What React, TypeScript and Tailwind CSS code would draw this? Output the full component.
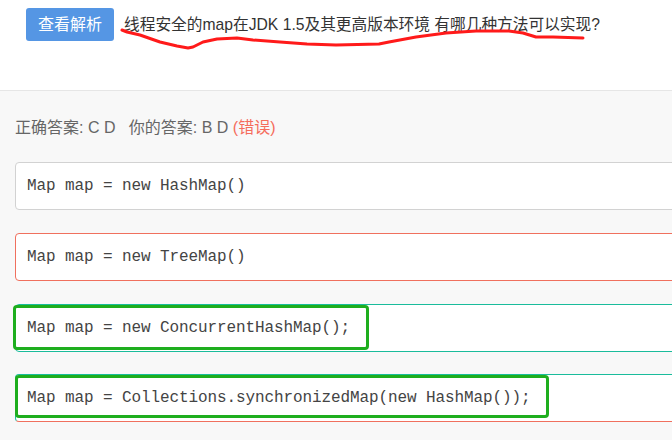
import React from "react";

const cjk = { fontFamily: '"Liberation Sans", "Noto Sans CJK SC", sans-serif' };
const mono = { fontFamily: '"Liberation Mono", "Courier New", monospace' };

function Option({ text, border, green, mt }: { text: string; border: string; green?: { l: number; w: number; h: number }; mt: string }) {
  return (
    <div className={`relative ml-[15px] w-[700px] h-[48px] bg-white rounded-[4px] border flex items-center pl-[11px] ${border} ${mt}`}>
      <span className="text-[16px] text-[#444] whitespace-pre tracking-[-0.1px]" style={mono}>{text}</span>
      {green && (
        <div
          className="absolute top-[0px] border-[3px] border-[#1eae1e] rounded-[4px]"
          style={{ left: green.l, width: green.w, height: green.h }}
        />
      )}
    </div>
  );
}

export default function App() {
  const pts = "122,30 127,32 140,35 160,42 177,46 188,48 193,47 203,42 217,39 237,38 253,40 280,42 307,44 336,45 379,44 389,42 416,37 446,33 476,31 509,31 523,33 536,37 553,37 583,38";
  return (
    <div className="w-[672px] h-[440px] overflow-hidden bg-[#f8f8f8] relative" style={cjk}>
      <div className="h-[91px] bg-white border-b border-[#e6e6e6] flex items-start pl-[26px] pt-[8px] gap-[10px]">
        <div className="h-[33px] px-[12px] bg-[#5596e4] rounded-[3px] text-white text-[16px] flex items-center">查看解析</div>
        <div className="h-[33px] flex items-center text-[15.7px] text-[#333] pt-[1px]">线程安全的map在JDK 1.5及其更高版本环境 有哪几种方法可以实现?</div>
      </div>
      <svg className="absolute left-0 top-0" width="672" height="60">
        <polyline points={pts} fill="none" stroke="#ff1a1a" strokeWidth="3" strokeLinejoin="round" strokeLinecap="round" />
      </svg>
      <div className="pt-[25px] pl-[15px] text-[16px] leading-[24px] text-[#666] whitespace-pre">
        正确答案: C D   你的答案: B D <span className="text-[#f56c5c]">(错误)</span>
      </div>
      <div className="mt-[22px] flex flex-col">
        <Option mt="mt-0" text="Map map = new HashMap()" border="border-[#d2d2d2]" />
        <Option mt="mt-[23px]" text="Map map = new TreeMap()" border="border-[#f0705e]" />
        <Option mt="mt-[23px]" text="Map map = new ConcurrentHashMap();" border="border-[#1abc9c]" green={{ l: -3, w: 356, h: 45 }} />
        <Option mt="mt-[22px]" text="Map map = Collections.synchronizedMap(new HashMap());" border="border-[#1abc9c] border-b-[#f0705e]" green={{ l: -1, w: 534, h: 43 }} />
      </div>
    </div>
  );
}
